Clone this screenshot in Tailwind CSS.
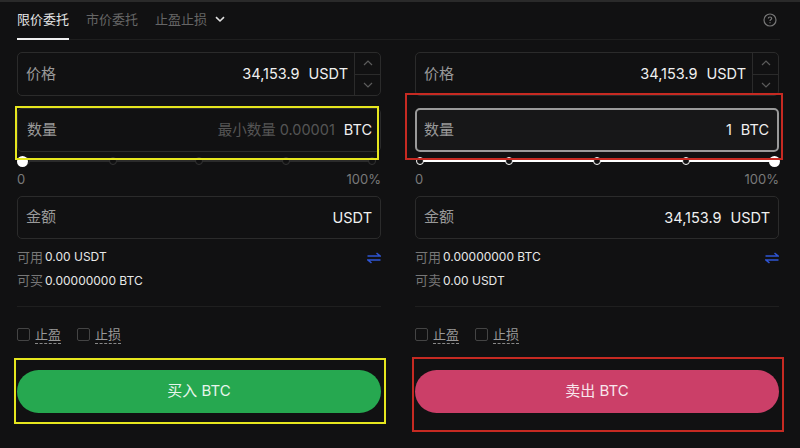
<!DOCTYPE html>
<html lang="zh-CN">
<head>
  <meta charset="UTF-8" />
  <title>限价委托</title>
  <script src="https://cdn.jsdelivr.net/npm/@tailwindcss/browser@4"></script>
</head>
<body class="bg-[#111112] font-['Inter','Noto_Sans_CJK_SC',sans-serif] text-[#e8e8e8]">
  <div class="relative w-[800px] h-[448px] overflow-hidden border-t-2 border-[#2a2a2a]">

    <!-- Tabs -->
    <div class="flex items-start justify-between h-[38px] ml-[17px] mr-[20px] pr-[3px] border-b border-[#1f1f1f] text-[13px]">
      <div class="flex gap-[17px] leading-[34px]">
        <div class="h-[38px] border-b-[2px] border-[#f0f0f0] text-[#e4e4e4]">限价委托</div>
        <div class="text-[#666]">市价委托</div>
        <div class="flex items-center gap-[8px] text-[#666] h-[34px]">
          止盈止损
          <svg width="10" height="7" viewBox="0 0 10 7" fill="none" stroke="#e0e0e0" stroke-width="1.6"><path d="M1 1.2 L5 5 L9 1.2"/></svg>
        </div>
      </div>
      <svg class="mt-[11px]" width="14" height="14" viewBox="0 0 14 14" fill="none" stroke="#777" stroke-width="1.2">
        <circle cx="7" cy="7" r="6"/>
        <path d="M5.3 5.6 C5.3 4.5 6 4 7 4 C8 4 8.7 4.6 8.7 5.4 C8.7 6.5 7 6.6 7 8"/>
        <path d="M7 9.3 V10.3"/>
      </svg>
    </div>

    <!-- Buy / sell columns -->
    <div class="grid grid-cols-[364px_364px] gap-x-[34px] pl-[17px] pt-[12px]">

      <!-- Buy -->
      <div>
        <div class="flex h-[44px] rounded-[5px] border border-[#2b2b2b]">
          <div class="flex-1 flex items-center justify-between pl-[8px] pr-[6px]">
            <span class="text-[15px] text-[#999]">价格</span>
            <span class="text-[14.5px] text-[#f0f0f0] flex gap-[9px]"><span>34,153.9</span><span>USDT</span></span>
          </div>
          <div class="w-[26px] flex flex-col border-l border-[#2b2b2b]">
            <div class="flex-1 flex items-center justify-center border-b border-[#2b2b2b]">
              <svg width="10" height="6" viewBox="0 0 10 6" fill="none" stroke="#5c5c5c" stroke-width="1.2"><path d="M1 5 L5 1 L9 5"/></svg>
            </div>
            <div class="flex-1 flex items-center justify-center">
              <svg width="10" height="6" viewBox="0 0 10 6" fill="none" stroke="#5c5c5c" stroke-width="1.2"><path d="M1 1 L5 5 L9 1"/></svg>
            </div>
          </div>
        </div>
        <div class="flex items-center justify-between h-[44px] mt-[12px] pl-[9px] pr-[8px] rounded-[5px] border border-[#2b2b2b]">
          <span class="text-[15px] text-[#999]">数量</span>
          <span class="text-[14.5px] flex gap-[9px]"><span class="text-[#555]">最小数量 0.00001</span><span class="text-[#f0f0f0]">BTC</span></span>
        </div>
        <div class="relative flex justify-between h-[10px] mt-[4px] px-[5px] items-center">
          <div class="absolute left-[5px] right-[5px] top-[4px] h-[2px] bg-[#2b2b2b]"></div>
          <div class="relative w-[8px] h-[8px] rounded-full bg-[#111112] border border-[#333]"></div>
          <div class="relative w-[8px] h-[8px] rounded-full bg-[#111112] border border-[#333]"></div>
          <div class="relative w-[8px] h-[8px] rounded-full bg-[#111112] border border-[#333]"></div>
          <div class="relative w-[8px] h-[8px] rounded-full bg-[#111112] border border-[#333]"></div>
          <div class="relative w-[8px] h-[8px] rounded-full bg-[#111112] border border-[#333]"></div>
          <div class="absolute left-0 top-0 w-[11px] h-[11px] rounded-full bg-white"></div>
        </div>
        <div class="flex justify-between text-[13px] text-[#7a7a7a] leading-[16px] mt-[5px]"><span>0</span><span>100%</span></div>
        <div class="flex items-center justify-between h-[43px] mt-[9px] pl-[8px] pr-[8px] rounded-[5px] border border-[#2b2b2b]">
          <span class="text-[15px] text-[#999]">金额</span>
          <span class="text-[14.5px] text-[#f0f0f0]">USDT</span>
        </div>
        <div class="flex items-center justify-between mt-[7px] h-[23px] text-[12px]">
          <span class="flex gap-[2px]"><span class="text-[#777] text-[13px]">可用</span><span>0.00 USDT</span></span>
          <svg width="14" height="12" viewBox="0 0 14 12" fill="none" stroke="#2f55d4" stroke-width="1.5"><path d="M0.5 4 H13 L9.5 1"/><path d="M13.5 8 H1 L4.5 11"/></svg>
        </div>
        <div class="flex items-center h-[23px] text-[12px] gap-[2px]"><span class="text-[#777] text-[13px]">可买</span><span>0.00000000 BTC</span></div>
        <div class="h-px bg-[#1f1f1f] mt-[14px]"></div>
        <div class="flex items-center gap-[16px] mt-[18px] text-[13px] text-[#999]">
          <span class="flex items-center gap-[5px]"><span class="w-[13px] h-[13px] rounded-[2px] border border-[#444]"></span><span class="border-b border-dashed border-[#888] leading-[18px]">止盈</span></span>
          <span class="flex items-center gap-[5px]"><span class="w-[13px] h-[13px] rounded-[2px] border border-[#444]"></span><span class="border-b border-dashed border-[#888] leading-[18px]">止损</span></span>
        </div>
        <div class="flex items-center justify-center h-[43px] mt-[26px] rounded-full bg-[#26a850] text-[15px] text-[#e8f5ec]">买入 BTC</div>
      </div>

      <!-- Sell -->
      <div>
        <div class="flex h-[44px] rounded-[5px] border border-[#2b2b2b]">
          <div class="flex-1 flex items-center justify-between pl-[8px] pr-[6px]">
            <span class="text-[15px] text-[#999]">价格</span>
            <span class="text-[14.5px] text-[#f0f0f0] flex gap-[9px]"><span>34,153.9</span><span>USDT</span></span>
          </div>
          <div class="w-[26px] flex flex-col border-l border-[#2b2b2b]">
            <div class="flex-1 flex items-center justify-center border-b border-[#2b2b2b]">
              <svg width="10" height="6" viewBox="0 0 10 6" fill="none" stroke="#5c5c5c" stroke-width="1.2"><path d="M1 5 L5 1 L9 5"/></svg>
            </div>
            <div class="flex-1 flex items-center justify-center">
              <svg width="10" height="6" viewBox="0 0 10 6" fill="none" stroke="#5c5c5c" stroke-width="1.2"><path d="M1 1 L5 5 L9 1"/></svg>
            </div>
          </div>
        </div>
        <div class="flex items-center justify-between h-[44px] mt-[12px] pl-[7px] pr-[8px] rounded-[5px] border-2 border-[#9a9a9a] bg-[#171718]">
          <span class="text-[15px] text-[#999]">数量</span>
          <span class="text-[14.5px] text-[#f0f0f0] flex gap-[9px]"><span>1</span><span>BTC</span></span>
        </div>
        <div class="relative flex justify-between h-[10px] mt-[4px] px-[1px] items-center">
          <div class="absolute left-[5px] right-[5px] top-[4px] h-[2px] bg-white"></div>
          <div class="relative w-[8px] h-[8px] rounded-full bg-[#111112] border border-white"></div>
          <div class="relative w-[8px] h-[8px] rounded-full bg-[#111112] border border-white"></div>
          <div class="relative w-[8px] h-[8px] rounded-full bg-[#111112] border border-white"></div>
          <div class="relative w-[8px] h-[8px] rounded-full bg-[#111112] border border-white"></div>
          <div class="relative w-[8px] h-[8px] rounded-full bg-[#111112] border border-white"></div>
          <div class="absolute right-[-1px] top-0 w-[11px] h-[11px] rounded-full bg-white"></div>
        </div>
        <div class="flex justify-between text-[13px] text-[#7a7a7a] leading-[16px] mt-[5px]"><span>0</span><span>100%</span></div>
        <div class="flex items-center justify-between h-[43px] mt-[9px] pl-[8px] pr-[8px] rounded-[5px] border border-[#2b2b2b]">
          <span class="text-[15px] text-[#999]">金额</span>
          <span class="text-[14.5px] text-[#f0f0f0] flex gap-[9px]"><span>34,153.9</span><span>USDT</span></span>
        </div>
        <div class="flex items-center justify-between mt-[7px] h-[23px] text-[12px]">
          <span class="flex gap-[2px]"><span class="text-[#777] text-[13px]">可用</span><span>0.00000000 BTC</span></span>
          <svg width="14" height="12" viewBox="0 0 14 12" fill="none" stroke="#2f55d4" stroke-width="1.5"><path d="M0.5 4 H13 L9.5 1"/><path d="M13.5 8 H1 L4.5 11"/></svg>
        </div>
        <div class="flex items-center h-[23px] text-[12px] gap-[2px]"><span class="text-[#777] text-[13px]">可卖</span><span>0.00 USDT</span></div>
        <div class="h-px bg-[#1f1f1f] mt-[14px]"></div>
        <div class="flex items-center gap-[16px] mt-[18px] text-[13px] text-[#999]">
          <span class="flex items-center gap-[5px]"><span class="w-[13px] h-[13px] rounded-[2px] border border-[#444]"></span><span class="border-b border-dashed border-[#888] leading-[18px]">止盈</span></span>
          <span class="flex items-center gap-[5px]"><span class="w-[13px] h-[13px] rounded-[2px] border border-[#444]"></span><span class="border-b border-dashed border-[#888] leading-[18px]">止损</span></span>
        </div>
        <div class="flex items-center justify-center h-[43px] mt-[26px] rounded-full bg-[#cb3f68] text-[15px] text-[#f8e6ec]">卖出 BTC</div>
      </div>
    </div>

    <!-- Annotation boxes drawn over the screenshot -->
    <div class="absolute left-[15px] top-[104px] w-[364px] h-[54px] border-2 border-[#e6e61e]"></div>
    <div class="absolute left-[14px] top-[356px] w-[372px] h-[66px] border-2 border-[#e6e61e]"></div>
    <div class="absolute left-[405px] top-[91px] w-[378px] h-[67px] border-2 border-[#c62a22]"></div>
    <div class="absolute left-[412px] top-[355px] w-[372px] h-[75px] border-2 border-[#c62a22]"></div>
  </div>
</body>
</html>
